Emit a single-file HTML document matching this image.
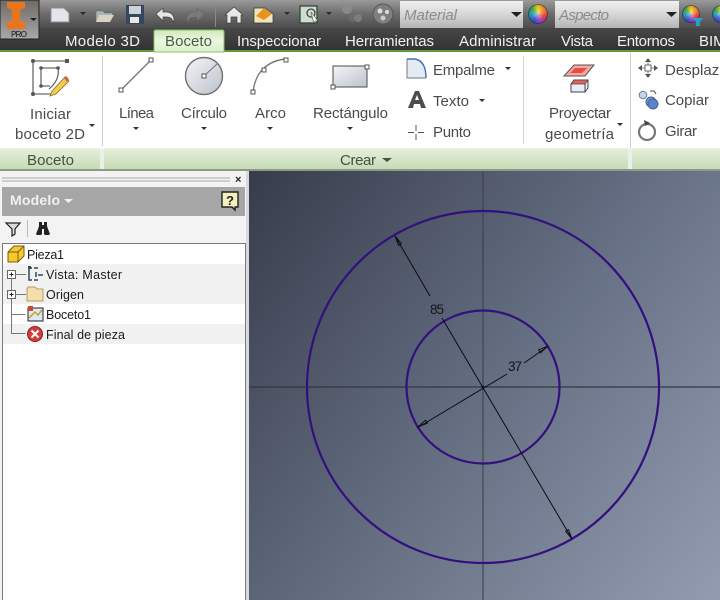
<!DOCTYPE html>
<html><head><meta charset="utf-8"><title>Boceto</title>
<style>
html,body{margin:0;padding:0;width:720px;height:600px;overflow:hidden;background:#fff;position:relative}
svg{display:block}
text{font-family:"Liberation Sans",sans-serif}
.tab{font-size:15px;fill:#f2f2f2}
.rb{font-size:15px;fill:#4a4a4a}
.tr{font-size:12.5px;fill:#1c1c1c}
.ball{position:absolute;border-radius:50%;background:radial-gradient(circle at 50% 50%,rgba(255,255,255,.55) 0,rgba(255,255,255,0) 45%,rgba(20,20,60,.35) 100%),conic-gradient(#f0c81e 0deg,#f07a28 70deg,#e0403c 110deg,#a840b8 160deg,#3a55c8 210deg,#2fa0b0 270deg,#3fae4a 310deg,#f0c81e 360deg);box-shadow:inset 0 0 0 1px rgba(30,30,80,.6)}
</style></head><body>
<svg width="720" height="600" viewBox="0 0 720 600" xmlns="http://www.w3.org/2000/svg">
<defs>
<linearGradient id="top" x1="0" y1="0" x2="0" y2="1"><stop offset="0" stop-color="#9a9a9a"/><stop offset=".45" stop-color="#6e6e6e"/><stop offset="1" stop-color="#4a4a4a"/></linearGradient>
<linearGradient id="tabs" x1="0" y1="0" x2="0" y2="1"><stop offset="0" stop-color="#474747"/><stop offset="1" stop-color="#333"/></linearGradient>
<linearGradient id="act" x1="0" y1="0" x2="0" y2="1"><stop offset="0" stop-color="#cfe9b8"/><stop offset=".5" stop-color="#edf6e4"/><stop offset="1" stop-color="#d9efc6"/></linearGradient>
<linearGradient id="lab" x1="0" y1="0" x2="0" y2="1"><stop offset="0" stop-color="#e6f1dc"/><stop offset="1" stop-color="#c6dcb6"/></linearGradient>
<linearGradient id="combo" x1="0" y1="0" x2="0" y2="1"><stop offset="0" stop-color="#f0f0f0"/><stop offset=".5" stop-color="#d6d6d6"/><stop offset="1" stop-color="#b4b4b4"/></linearGradient>
<linearGradient id="cv" x1="0" y1="0" x2="1" y2="1"><stop offset="0" stop-color="#343a4a"/><stop offset=".5" stop-color="#667084"/><stop offset="1" stop-color="#9aa2b6"/></linearGradient>
<linearGradient id="cvh" x1="0" y1="0" x2="1" y2="0"><stop offset="0" stop-color="#3c4250"/><stop offset=".5" stop-color="#5f6879"/><stop offset="1" stop-color="#7f889e"/></linearGradient>
<linearGradient id="logo" x1="0" y1="0" x2="0" y2="1"><stop offset="0" stop-color="#6e6a66"/><stop offset="1" stop-color="#a8a8a8"/></linearGradient>
<linearGradient id="disc" x1="0" y1="0" x2="1" y2="1"><stop offset="0" stop-color="#f4f5f8"/><stop offset="1" stop-color="#bcc1cb"/></linearGradient>
</defs>

<!-- top bars -->
<rect width="720" height="29" fill="url(#top)"/>
<rect y="28" width="720" height="22" fill="url(#tabs)"/>
<rect y="50" width="720" height="2" fill="#5e9a3c"/>
<rect y="52" width="720" height="97" fill="#fff"/>

<!-- logo -->
<rect x="0" y="0" width="39" height="39" fill="url(#logo)" stroke="#222"/>
<path d="M7 2h18v6l-5 2v10l5 2v7H7v-7l5-2V10L7 8z" fill="#e8761e"/>
<path d="M30 18h7l-3.500 3z" fill="#222"/>
<text x="11" y="37" font-size="8" fill="#111" textLength="16">PRO</text>

<!-- QAT -->
<path d="M51 8h13l5 5v9H51z" fill="#e3e5e8" stroke="#8b8f96"/>
<path d="M80 12h6l-3 3z" fill="#2a2a2a"/>
<path d="M96 11h7l2 2h8l-3 9H96z" fill="#aab5bd" stroke="#666" stroke-width=".6"/><path d="M99 15h15l-4 7H96z" fill="#d8d3bf"/>
<rect x="126" y="5" width="18" height="19" fill="#35475e"/><rect x="129" y="6" width="12" height="8" fill="#cdd3da"/><rect x="130" y="17" width="9" height="6" fill="#e8e8e8"/>
<path d="M156 14l7-6v4h4q7 1 7 8l-1 2q-1-5-6-5h-4v4z" fill="#e6e6e6" stroke="#444" stroke-width=".7"/>
<path d="M204 14l-7-6v4h-4q-6 1-6 8l1 2q1-5 5-5h4v4z" fill="#7a7a7a" stroke="#666" stroke-width=".6"/>
<rect x="215" y="5" width="1" height="22" fill="#8a8a8a"/>
<path d="M225 15l9-8 9 8h-2v8h-4v-6h-6v6h-4v-8z" fill="#e8e8e8" stroke="#444" stroke-width=".7"/>
<path d="M254 8h11l8 6v9h-19z" fill="#f2e3b8" stroke="#333" stroke-width=".7"/><path d="M256 16l8-8 8 6-8 6z" fill="#e89320"/>
<path d="M284 12h6l-3 3z" fill="#2a2a2a"/>
<rect x="300" y="6" width="17" height="17" fill="#cfdcd0" stroke="#2e4a33" stroke-width="1.300"/><circle cx="311" cy="13" r="4" fill="none" stroke="#444" stroke-width="1.300"/>
<path d="M311 12l7 9-3 0-1 3z" fill="#f1f1f1" stroke="#333" stroke-width=".5"/>
<path d="M326 12h6l-3 3z" fill="#2a2a2a"/>
<circle cx="347" cy="9" r="5" fill="#8a8a8a"/><circle cx="352" cy="18" r="4" fill="#6a6a6a"/><circle cx="358" cy="18" r="4" fill="#7c7c7c"/>
<circle cx="383" cy="14" r="10" fill="#7e7e7e" stroke="#555"/><circle cx="380" cy="11" r="2.500" fill="#ddd"/><circle cx="387" cy="12" r="2" fill="#ddd"/><circle cx="383" cy="18" r="2.500" fill="#ccc"/>

<rect x="400" y="1" width="123" height="27" fill="url(#combo)"/>
<text x="404" y="20" font-size="15" font-style="italic" fill="#8b8b8b" textLength="53">Material</text>
<path d="M511 12h11l-5.500 5z" fill="#222"/>
<rect x="555" y="1" width="124" height="27" fill="url(#combo)"/>
<text x="559" y="20" font-size="15" font-style="italic" fill="#8b8b8b" textLength="50">Aspecto</text>
<path d="M666 12h11l-5.500 5z" fill="#222"/>

<!-- tabs -->
<path d="M154 52V32q0-2 2-2h66q2 0 2 2v20z" fill="url(#act)" stroke="#8dc06a"/>
<text class="tab" x="65" y="46" textLength="75">Modelo 3D</text>
<text x="165" y="46" font-size="15" fill="#4a5a45" textLength="47">Boceto</text>
<text class="tab" x="237" y="46" textLength="84">Inspeccionar</text>
<text class="tab" x="345" y="46" textLength="89">Herramientas</text>
<text class="tab" x="459" y="46" textLength="77">Administrar</text>
<text class="tab" x="561" y="46" textLength="32">Vista</text>
<text class="tab" x="617" y="46" textLength="58">Entornos</text>
<text class="tab" x="699" y="46">BIM</text>

<!-- ribbon: Iniciar boceto -->
<g fill="none" stroke="#6a6a6a" stroke-width="1.300">
<path d="M33 61h34M33 61v33M33 94h20"/>
<path d="M41 68h17M41 68v18h9M58 68q2 12-9 21"/>
</g>
<g fill="#555"><rect x="65" y="59" width="4" height="4"/><circle cx="33" cy="61" r="2"/><circle cx="33" cy="94" r="2"/><circle cx="41" cy="68" r="1.800"/><circle cx="58" cy="68" r="1.800"/><circle cx="41" cy="86" r="1.800"/></g>
<path d="M52 91l13-14 4 4-13 13-6 2z" fill="#f0cc52" stroke="#8a6a2a" stroke-width=".8"/><path d="M64 78l2-2 3 3-2 3z" fill="#c9684a"/>
<text class="rb" x="30" y="119" textLength="41">Iniciar</text>
<text class="rb" x="15" y="139" textLength="70">boceto 2D</text>
<path d="M89 124h6l-3 3z" fill="#333"/>
<rect x="102" y="56" width="1" height="90" fill="#cfcfcf"/>

<!-- Línea -->
<path d="M121 90l30-30" stroke="#7a7a7a" stroke-width="1.400" fill="none"/>
<rect x="119" y="88" width="4" height="4" fill="#fff" stroke="#555"/><rect x="149" y="58" width="4" height="4" fill="#fff" stroke="#555"/>
<text class="rb" x="119" y="118" textLength="35">Línea</text>
<path d="M133 127h6l-3 3z" fill="#333"/>
<!-- Círculo -->
<circle cx="204" cy="76" r="18.500" fill="url(#disc)" stroke="#707070" stroke-width="1.400"/>
<path d="M204 76l14-13" stroke="#777" stroke-width="1.100"/><rect x="202" y="74" width="4" height="4" fill="#fff" stroke="#555"/>
<text class="rb" x="181" y="118" textLength="46">Círculo</text>
<path d="M201 127h6l-3 3z" fill="#333"/>
<!-- Arco -->
<path d="M253 92q2-16 11-24t22-9" fill="none" stroke="#777" stroke-width="1.400"/>
<rect x="251" y="90" width="4" height="4" fill="#fff" stroke="#555"/><rect x="262" y="68" width="4" height="4" fill="#fff" stroke="#555"/><rect x="284" y="58" width="4" height="4" fill="#fff" stroke="#555"/>
<text class="rb" x="255" y="118" textLength="31">Arco</text>
<path d="M267 127h6l-3 3z" fill="#333"/>
<!-- Rectángulo -->
<rect x="333" y="66" width="34" height="21" fill="url(#disc)" stroke="#666" stroke-width="1.200"/>
<rect x="331" y="85" width="4" height="4" fill="#fff" stroke="#555"/><rect x="365" y="65" width="4" height="4" fill="#fff" stroke="#555"/>
<text class="rb" x="313" y="118" textLength="75">Rectángulo</text>
<path d="M347 127h6l-3 3z" fill="#333"/>
<!-- Empalme etc -->
<path d="M407 59h8q11 2 11 19h-19z" fill="#e4ebf3"/><path d="M407 59v19h19" fill="none" stroke="#777"/><path d="M407 59h8q11 2 11 19" fill="none" stroke="#3d72b5" stroke-width="1.400"/>
<text class="rb" x="433" y="75" textLength="62">Empalme</text>
<path d="M505 67h6l-3 3z" fill="#333"/>
<path d="M408 108l7-17h4l7 17h-5l-1-4h-6l-1 4zM415 100h4l-2-5z" fill="#4d4d4d" fill-rule="evenodd"/>
<text class="rb" x="433" y="106" textLength="36">Texto</text>
<path d="M479 99h6l-3 3z" fill="#333"/>
<path d="M408 132.500h6M418 132.500h6M416 125v6M416 134v6" stroke="#555" stroke-width="1"/>
<text class="rb" x="433" y="137" textLength="38">Punto</text>
<rect x="523" y="56" width="1" height="88" fill="#d5d5d5"/>
<!-- Proyectar -->
<path d="M564 76l10-11h20l-9 11z" fill="#f4a9a4" stroke="#555" stroke-width="1"/><path d="M570 73l5-5h12l-5 5z" fill="#e94b45"/>
<path d="M571 84l3-4h14v8l-3 4h-14z" fill="#e9edf4" stroke="#444" stroke-width="1"/><path d="M571 84h14l3-4h-14z" fill="#e8605a" stroke="#444" stroke-width=".7"/><path d="M585 84v8" stroke="#444"/>
<text class="rb" x="549" y="118" textLength="62">Proyectar</text>
<text class="rb" x="545" y="139" textLength="69">geometría</text>
<path d="M617 123h6l-3 3z" fill="#333"/>
<rect x="630" y="52" width="1" height="97" fill="#d0d0d0"/>
<!-- Right tools -->
<g fill="#555"><path d="M648 58l3 4h-6zM648 78l3-4h-6zM638 68l4-3v6zM658 68l-4-3v6z"/></g>
<path d="M648 62v12M642 68h12" stroke="#888"/>
<rect x="645" y="65" width="6" height="6" fill="#fff" stroke="#666"/>
<text class="rb" x="665" y="75">Desplazar</text>
<circle cx="643" cy="95" r="3.800" fill="#c3d3e8" stroke="#6a7a90"/><circle cx="651" cy="102" r="5" fill="#6f96d4" stroke="#46649c"/><circle cx="653" cy="104" r="5" fill="#5b85c8" stroke="#46649c"/>
<path d="M650 91h4l2 3" fill="none" stroke="#444"/>
<text class="rb" x="665" y="105" textLength="44">Copiar</text>
<circle cx="647" cy="132" r="8" fill="none" stroke="#777" stroke-width="2.200"/><path d="M644 120l6 3-5 3z" fill="#444"/>
<text class="rb" x="665" y="136" textLength="32">Girar</text>

<!-- Panel labels -->
<rect y="149" width="720" height="22" fill="#eceeea"/>
<rect y="148" width="100" height="21" fill="url(#lab)"/>
<rect x="104" y="148" width="524" height="21" fill="url(#lab)"/>
<rect x="632" y="148" width="88" height="21" fill="url(#lab)"/>
<rect x="0" y="169" width="720" height="2" fill="#8e998a"/>
<text x="27" y="165" font-size="15" fill="#45523e" textLength="47">Boceto</text>
<text x="340" y="165" font-size="15" fill="#45523e" textLength="36">Crear</text>
<path d="M382 158h10l-5 4z" fill="#45523e"/>

<!-- Left panel -->
<rect x="0" y="171" width="249" height="429" fill="#f3f3f3"/>
<path d="M2 178h228M2 181h228" stroke="#aaa" stroke-width="1"/>
<text x="235" y="183" font-size="11" font-weight="bold" fill="#222">×</text>
<rect x="2" y="187" width="243" height="29" fill="#a6a6a6"/>
<text x="10" y="205" font-size="14" font-weight="bold" fill="#f0f0f0" textLength="50">Modelo</text>
<path d="M64 199h9l-4.500 4z" fill="#f0f0f0"/>
<path d="M222 192h16v15h-3v3l-3-3h-10z" fill="#f5efbd" stroke="#222" stroke-width="1.400"/>
<text x="226" y="205" font-size="13" font-weight="bold" fill="#222">?</text>
<path d="M6 223h14l-5 6v5l-3 2v-7z" fill="#ddd" stroke="#222" stroke-width="1.200"/>
<rect x="27" y="220" width="1" height="17" fill="#bbb"/>
<path d="M39 222h3v3h2v-3h3v4l1 3 2 5-1 1h-4l-1-1v-5h-2v5l-1 1h-4l-1-1 2-5 1-3z" fill="#222"/>
<rect x="2.500" y="243.500" width="243" height="360" fill="#fff" stroke="#7a7a7a"/>
<rect x="3" y="304" width="242" height="20" fill="#fff"/>
<rect x="3" y="264" width="242" height="40" fill="#f1f1f1"/>
<rect x="3" y="324" width="242" height="20" fill="#f1f1f1"/>

<path d="M8 252l6-6h10v10l-6 6H8z" fill="#f6c92e" stroke="#7a5a10" stroke-width="1"/><path d="M8 252h10v10M18 252l6-6" fill="none" stroke="#7a5a10"/>
<text class="tr" x="27" y="259" textLength="37">Pieza1</text>

<path d="M11.500 279v54.500h14M15 274.500h11M15 294.500h11M11.500 314.500h14" stroke="#777" fill="none" stroke-width="1"/>
<rect x="7.500" y="270.500" width="8" height="8" fill="#fff" stroke="#666"/><path d="M9.500 274.500h4M11.500 272.500v4" stroke="#222"/>
<rect x="7.500" y="290.500" width="8" height="8" fill="#fff" stroke="#666"/><path d="M9.500 294.500h4M11.500 292.500v4" stroke="#222"/>
<path d="M32 268h-3v12h3M34 268h4M34 280h4M38 275h5M36 272v5" stroke="#2d4a60" stroke-width="1.500" fill="none"/>
<rect x="28" y="266" width="3" height="3" fill="#2d4a60"/>
<text class="tr" x="46" y="279" textLength="76">Vista: Master</text>
<path d="M27 289l1-2h7l2 2h6v12H27z" fill="#f6deaa" stroke="#b49a6a"/>
<text class="tr" x="46" y="299" textLength="38">Origen</text>
<rect x="28" y="308" width="15" height="13" fill="#dfe6f3" stroke="#222"/><path d="M29 318l6-6 3 3 4-5" stroke="#c9a02a" fill="none" stroke-width="1.500"/><rect x="28" y="306" width="5" height="5" fill="#c84a30"/>
<text class="tr" x="46" y="319" textLength="45">Boceto1</text>
<circle cx="35" cy="334" r="7.500" fill="#d23c3c" stroke="#8a2020"/><path d="M31.500 330.500l7 7M38.500 330.500l-7 7" stroke="#fff" stroke-width="2"/>
<text class="tr" x="46" y="339" textLength="79">Final de pieza</text>

<!-- Canvas -->
<rect x="249" y="171" width="471" height="429" fill="url(#cvh)"/>
<rect x="249" y="171" width="471" height="429" fill="url(#cv)" opacity=".75"/>
<path d="M249 387h471" stroke="#34373f" stroke-width="1.300"/>
<path d="M483 171v429" stroke="#383c46" stroke-width="1"/>
<circle cx="483" cy="387" r="176" fill="none" stroke="#33107e" stroke-width="2.200"/>
<circle cx="483" cy="387" r="76.500" fill="none" stroke="#33107e" stroke-width="2.200"/>
<g stroke="#0c0c12" stroke-width="1" fill="none">
<path d="M395 236L430 296M442 318L572 539"/>
<path d="M417 428L507 374M524 363L547 347"/>
</g>
<g fill="none" stroke="#0c0c12" stroke-width=".9">
<path d="M395 236l6.600 7.700-3.100 1.800z"/>
<path d="M572 539l-6.500-7.700 3.100-1.800z"/>
<path d="M548 346l-7.500 6.800-2-3z"/>
<path d="M418 427l7.500-6.800 2 3z"/>
</g>
<circle cx="483" cy="387" r="1.500" fill="#15103a"/>
<text x="430" y="314" font-size="13.500" fill="#14161e" textLength="14">85</text>
<text x="508" y="371" font-size="13.500" fill="#14161e" textLength="14">37</text>
<rect x="246" y="171" width="3" height="429" fill="#d9d9d9"/>
</svg>
<div class="ball" style="left:528px;top:4px;width:20px;height:20px"></div>
<div class="ball" style="left:682px;top:5px;width:18px;height:18px"></div>
<div class="ball" style="left:712px;top:5px;width:18px;height:18px"></div>
<svg style="position:absolute;left:692px;top:17px" width="12" height="11" viewBox="0 0 12 11"><path d="M1 1h10l-3 4v4H4V5z" fill="#2aa0c8"/></svg>
</body></html>
